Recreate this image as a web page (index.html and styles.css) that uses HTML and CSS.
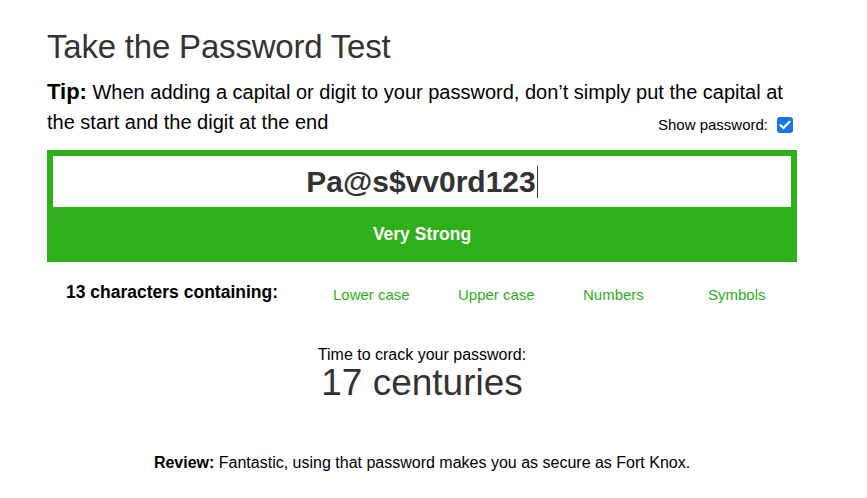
FILE: index.html
```html
<!DOCTYPE html>
<html>
<head>
<meta charset="utf-8">
<link rel="stylesheet" href="styles.css">
</head>
<body>
<div class="page">
  <h1 class="title">Take the Password Test</h1>
  <p class="tip"><b>Tip:</b> When adding a capital or digit to your password, don’t simply put the capital at the start and the digit at the end <span class="show"><label>Show password:</label><span class="check"><svg width="12" height="10" viewBox="0 0 12 10"><path d="M1.5 5.2 L4.5 8 L10.5 1.8" fill="none" stroke="#fff" stroke-width="2.2" stroke-linecap="round" stroke-linejoin="round"/></svg></span></span></p>
  <div class="meter">
    <div class="field"><span class="pw">Pa@s$vv0rd123</span><span class="caret"></span></div>
    <div class="strength">Very Strong</div>
  </div>
  <div class="contains">
    <div class="count">13 characters containing:</div>
    <div class="item">Lower case</div>
    <div class="item">Upper case</div>
    <div class="item">Numbers</div>
    <div class="item">Symbols</div>
  </div>
  <div class="crack">
    <div class="crack-label">Time to crack your password:</div>
    <div class="crack-time">17 centuries</div>
  </div>
  <p class="review"><b>Review:</b> Fantastic, using that password makes you as secure as Fort Knox.</p>
</div>
</body>
</html>
```
FILE: styles.css
```css
html, body { margin: 0; padding: 0; background: #fff; }
body { font-family: "Liberation Sans", Arial, sans-serif; color: #000; }
.page { width: 750px; padding: 0 0 0 47px; }
.title { margin: 0; padding-top: 29px; font-size: 33px; font-weight: normal; color: #333; line-height: 36px; letter-spacing: -0.2px; }
.tip { margin: 12px 0 0; font-size: 20px; line-height: 30px; }
.tip b { font-size: 22px; }
.show { float: right; display: inline-flex; align-items: center; font-size: 15px; margin-top: 3px; }
.show label { margin-right: 9px; }
.check { width: 16px; height: 16px; background: #1a73e8; border-radius: 3px; display: inline-flex; align-items: center; justify-content: center; margin-right: 4px; }
.meter { margin-top: 13px; background: #2db01a; padding: 6px 6px 0; }
.field { background: #fff; height: 51px; display: flex; align-items: center; justify-content: center; }
.pw { font-size: 30px; font-weight: bold; color: #333; }
.caret { width: 1px; height: 32px; background: #333; margin-left: 1px; }
.strength { height: 55px; display: flex; align-items: center; justify-content: center; color: #fff; font-weight: bold; font-size: 17.5px; }
.contains { display: grid; grid-template-columns: 250px repeat(4, 125px); margin-top: 20px; align-items: start; }
.count { text-align: center; font-weight: bold; font-size: 17.5px; }
.item { padding-left: 36px; padding-top: 4px; color: #2db01a; font-size: 15px; }
.crack { text-align: center; margin-top: 43px; }
.crack-label { font-size: 16px; }
.crack-time { font-size: 37px; color: #333; line-height: 38px; }
.review { text-align: center; font-size: 16px; margin: 52px 0 0; }
```
